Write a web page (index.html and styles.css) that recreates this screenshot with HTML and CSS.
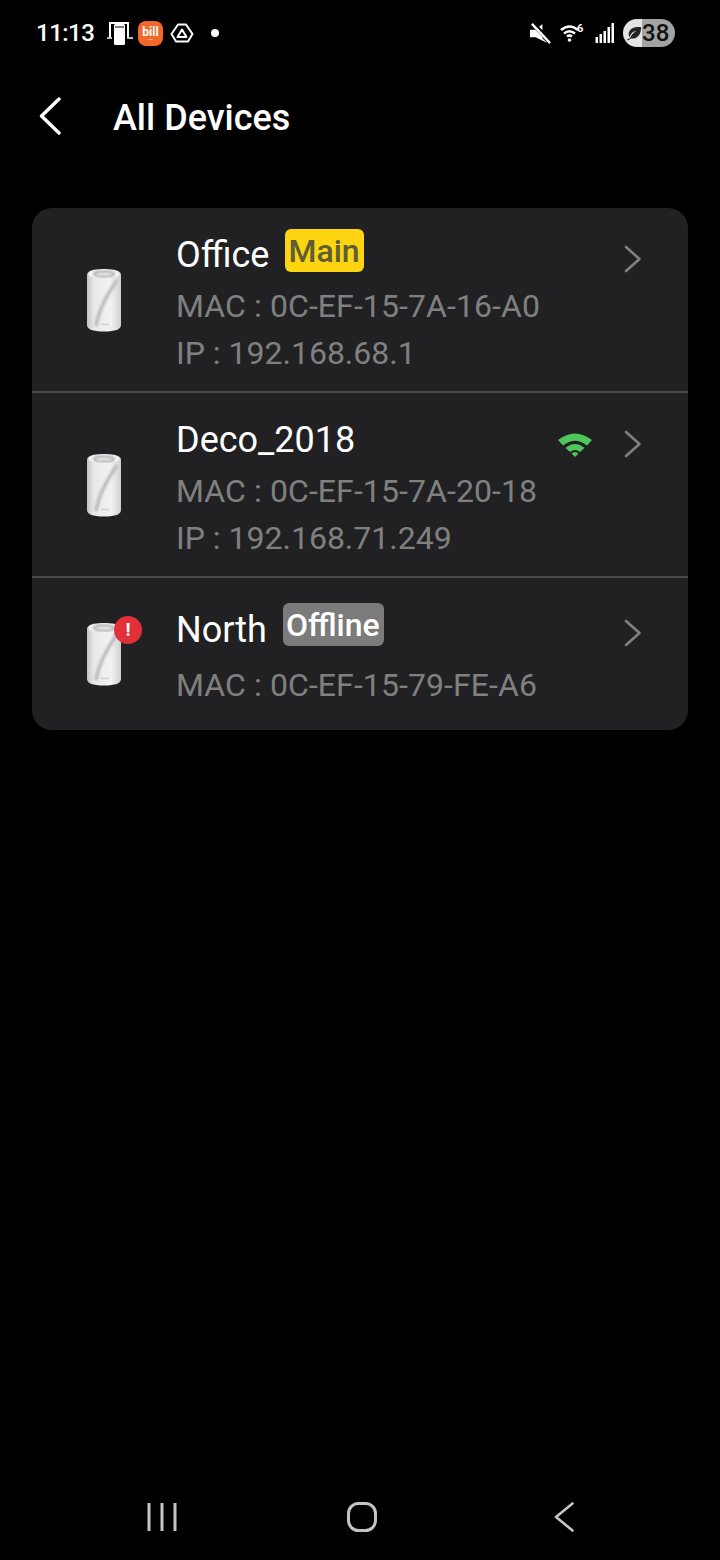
FILE: index.html
```html
<!DOCTYPE html>
<html lang="en">
<head>
    <meta charset="UTF-8">
    <meta name="viewport" content="width=device-width, initial-scale=1.0">
    <title>All Devices</title>
    <link rel="stylesheet" href="styles.css">
</head>
<body>
    <svg class="defs" width="0" height="0">
        <defs>
            <linearGradient id="deco_body" x1="0" y1="0" x2="1" y2="0">
                <stop offset="0" stop-color="#c4c4c4"/>
                <stop offset="0.2" stop-color="#e8e8e8"/>
                <stop offset="0.7" stop-color="#f2f2f2"/>
                <stop offset="1" stop-color="#d0d0d0"/>
            </linearGradient>
            <filter id="soft" x="-20%" y="-20%" width="140%" height="140%">
                <feGaussianBlur stdDeviation="0.9"/>
            </filter>
            <symbol id="deco" viewBox="0 0 36 64">
                <path d="M1 7 Q1 1 18 1 Q35 1 35 7 V57 Q35 63.500 18 63.500 Q1 63.500 1 57 Z" fill="url(#deco_body)"/>
                <ellipse cx="18" cy="6" rx="15.500" ry="4.500" fill="#f3f3f3"/>
                <ellipse cx="18" cy="6" rx="10" ry="2.500" fill="none" stroke="#a4a4a4" stroke-width="1.800" filter="url(#soft)"/>
                <path d="M31 12 C22 26 13 40 10 58" fill="none" stroke="#bcbcbc" stroke-width="3.500" filter="url(#soft)"/>
                <path d="M15 56.500 H23" stroke="#d0d0d0" stroke-width="1.500"/>
            </symbol>
            <symbol id="chevron" viewBox="0 0 18 28">
                <path d="M2 2 L15.500 14 L2 26" fill="none" stroke="#808080" stroke-width="2.600" stroke-linecap="round" stroke-linejoin="round"/>
            </symbol>
        </defs>
    </svg>

    <div class="status_bar">
        <div class="status_left">
            <span class="clock">11:13</span>
            <svg class="ic_mirror" viewBox="0 0 26 24">
                <path d="M3 16 V2 H21 V16" fill="none" stroke="#fff" stroke-width="2"/>
                <path d="M0 17 H5 M20 17 H26" stroke="#fff" stroke-width="1.600"/>
                <rect x="7" y="3" width="11" height="21" rx="1.500" fill="#fff"/>
                <path d="M8 6 H17" stroke="#000" stroke-width="1"/>
            </svg>
            <span class="ic_bill">bill<i class="bill_sub">•••</i></span>
            <svg class="ic_drive" viewBox="0 0 24 22">
                <path d="M8 2.500 H16 L22.500 12 L18 19.500 H6 L1.500 12 Z" fill="none" stroke="#fff" stroke-width="2" stroke-linejoin="round"/>
                <path d="M12 7.500 L16.500 15 H7.500 Z" fill="none" stroke="#fff" stroke-width="2" stroke-linejoin="round"/>
            </svg>
            <span class="status_dot"></span>
        </div>
        <div class="status_right">
            <svg class="ic_mute" viewBox="0 0 22 22">
                <path d="M0 7 H6 L13 1 V16 L18 21 L6 15 H0 Z" fill="#fff"/>
                <path d="M2 0 L22 20" stroke="#000" stroke-width="5"/>
                <path d="M2 1 L21 21" stroke="#fff" stroke-width="2.600"/>
            </svg>
            <svg class="ic_wifi6" viewBox="0 0 26 20">
                <path d="M1 8 Q9.500 1 18 8 M4 11.500 Q9.500 7 15 11.500 M7 14.500 Q9.500 12.500 12 14.500" fill="none" stroke="#fff" stroke-width="2.500"/>
                <circle cx="9.500" cy="18" r="1.800" fill="#fff"/>
                <text x="17" y="9.500" class="wifi_six">6</text>
            </svg>
            <svg class="ic_signal" viewBox="0 0 20 20">
                <path d="M0.500 14 H3 V20 H0.500 Z M4.500 11 H7 V20 H4.500 Z M8.500 8 H11 V20 H8.500 Z M12.500 4 H15 V20 H12.500 Z M16.500 0 H19 V20 H16.500 Z" fill="#fff"/>
            </svg>
            <div class="battery">
                <svg class="ic_leaf" viewBox="0 0 18 16">
                    <path d="M17 1 C9 0 3 3 3 9 C3 10 3.500 11 4 12 C5 8 8 6 12 5 C9 7 6 9 4.500 13 L1 15 L2 16 L5.500 13.500 C12 15 17 10 17 1 Z" fill="#222"/>
                </svg>
                <span class="battery_level">38</span>
            </div>
        </div>
    </div>

    <div class="header">
        <svg class="back" viewBox="0 0 22 38">
            <path d="M20 2 L2.500 19 L20 36" fill="none" stroke="#fff" stroke-width="3.400" stroke-linecap="round" stroke-linejoin="round"/>
        </svg>
        <h1 class="title">All Devices</h1>
    </div>

    <div class="card">
        <div class="row row_first">
            <div class="device">
                <svg class="deco"><use href="#deco"/></svg>
            </div>
            <div class="info info_low">
                <div class="name_line">
                    <span class="name">Office</span>
                    <span class="badge badge_main">Main</span>
                    <svg class="chevron"><use href="#chevron"/></svg>
                </div>
                <p class="meta meta_mac">MAC : 0C-EF-15-7A-16-A0</p>
                <p class="meta">IP : 192.168.68.1</p>
            </div>
        </div>
        <div class="row row_mid">
            <div class="device">
                <svg class="deco"><use href="#deco"/></svg>
            </div>
            <div class="info info_low">
                <div class="name_line">
                    <span class="name">Deco_2018</span>
                    <svg class="signal_good" viewBox="0 0 34 26">
                        <path d="M0 9 Q17 -4 34 9 L29 14.500 Q17 5 5 14.500 Z" fill="#4fc659"/>
                        <path d="M7.500 17 Q17 9 26.500 17 L22 21 Q17 17 12 21 Z" fill="#4fc659"/>
                        <path d="M13.500 22.500 Q17 19.500 20.500 22.500 L17 26 Z" fill="#4fc659"/>
                    </svg>
                    <svg class="chevron chevron_near"><use href="#chevron"/></svg>
                </div>
                <p class="meta meta_mac">MAC : 0C-EF-15-7A-20-18</p>
                <p class="meta">IP : 192.168.71.249</p>
            </div>
        </div>
        <div class="row row_last">
            <div class="device">
                <svg class="deco"><use href="#deco"/></svg>
                <span class="alert">!</span>
            </div>
            <div class="info info_mid">
                <div class="name_line">
                    <span class="name">North</span>
                    <span class="badge badge_offline">Offline</span>
                    <svg class="chevron"><use href="#chevron"/></svg>
                </div>
                <p class="meta meta_mac_far">MAC : 0C-EF-15-79-FE-A6</p>
            </div>
        </div>
    </div>

    <div class="nav_bar">
        <svg class="nav_recent" viewBox="0 0 30 30">
            <path d="M2 1 V29 M15 1 V29 M28 1 V29" stroke="#c4c4c4" stroke-width="3"/>
        </svg>
        <svg class="nav_home" viewBox="0 0 30 30">
            <rect x="1.500" y="1.500" width="27" height="27" rx="10" fill="none" stroke="#c4c4c4" stroke-width="3"/>
        </svg>
        <svg class="nav_back" viewBox="0 0 20 30">
            <path d="M18.500 1.500 L2 15 L18.500 28.500" fill="none" stroke="#c4c4c4" stroke-width="2.600" stroke-linecap="round" stroke-linejoin="round"/>
        </svg>
    </div>
</body>
</html>
```

FILE: styles.css
```css
* {
    margin: 0;
    padding: 0;
    box-sizing: border-box;
}

body {
    font-family: 'Roboto', sans-serif;
    background-color: #000;
    color: #fff;
    width: 720px;
    height: 1560px;
    overflow: hidden;
    display: flex;
    flex-direction: column;
}

.defs {
    position: absolute;
}

/* status bar */
.status_bar {
    height: 66px;
    display: flex;
    justify-content: space-between;
    align-items: center;
    padding: 0 45px 0 36px;
}

.status_left,
.status_right {
    display: flex;
    align-items: center;
}

.clock {
    font-size: 24px;
    font-weight: 500;
    letter-spacing: -0.5px;
    line-height: 30px;
    width: 71px;
}

.ic_mirror {
    width: 26px;
    height: 24px;
}

.ic_bill {
    width: 25px;
    height: 25px;
    margin-left: 5px;
    border-radius: 8px;
    background-color: #f2682a;
    font-size: 12px;
    font-weight: 700;
    line-height: 12px;
    text-align: center;
    padding-top: 5px;
}

.bill_sub {
    display: block;
    font-size: 4px;
    line-height: 4px;
    font-style: normal;
}

.ic_drive {
    width: 24px;
    height: 22px;
    margin-left: 7px;
}

.status_dot {
    width: 8px;
    height: 8px;
    border-radius: 50%;
    background-color: #fff;
    margin-left: 17px;
}

.ic_mute {
    width: 21px;
    height: 21px;
}

.ic_wifi6 {
    width: 26px;
    height: 20px;
    margin-left: 9px;
    margin-top: -3px;
}

.wifi_six {
    font-size: 11px;
    font-weight: 700;
    fill: #fff;
}

.ic_signal {
    width: 20px;
    height: 20px;
    margin-left: 9px;
}

.battery {
    width: 52px;
    height: 28px;
    margin-left: 8px;
    border-radius: 14px;
    background: linear-gradient(to right, #e4e4e4 0, #e4e4e4 19px, #a3a3a3 19px);
    display: flex;
    align-items: center;
    padding-left: 3px;
    color: #111;
}

.ic_leaf {
    width: 16px;
    height: 15px;
}

.battery_level {
    font-size: 24px;
    font-weight: 500;
    line-height: 28px;
}

/* header */
.header {
    height: 102px;
    display: flex;
    align-items: center;
    padding-left: 39px;
}

.back {
    width: 22px;
    height: 38px;
    margin-top: -2px;
}

.title {
    font-size: 36px;
    font-weight: 500;
    line-height: 40px;
    margin-left: 52px;
    margin-top: 2px;
}

/* device list */
.card {
    margin: 40px 32px 0;
    background-color: #212123;
    border-radius: 20px;
}

.row {
    display: flex;
    align-items: center;
}

.row_first {
    height: 185px;
    border-bottom: 2px solid #48484a;
}

.row_mid {
    height: 185px;
    border-bottom: 2px solid #48484a;
}

.row_last {
    height: 152px;
}

.device {
    position: relative;
    width: 144px;
    padding-left: 54px;
    display: flex;
}

.deco {
    width: 36px;
    height: 64px;
}

.alert {
    position: absolute;
    left: 82px;
    top: -6px;
    width: 28px;
    height: 28px;
    border-radius: 50%;
    background-color: #e2303a;
    font-size: 19px;
    font-weight: 700;
    line-height: 28px;
    text-align: center;
}

.info {
    flex: 1;
    padding-right: 46px;
}

.info_low {
    margin-top: 10px;
}

.info_mid {
    margin-top: 7px;
}

.name_line {
    display: flex;
    align-items: center;
    height: 47px;
}

.name {
    font-size: 36px;
    line-height: 47px;
}

.badge {
    border-radius: 6px;
    height: 43px;
    font-size: 32px;
    font-weight: 500;
    line-height: 44px;
    margin-top: -11px;
    padding: 0 4px 0 3px;
    margin-left: 16px;
}

.badge_main {
    background-color: #fcd40f;
    color: #5f5c38;
}

.badge_offline {
    background-color: #7b7b7b;
}

.chevron {
    width: 18px;
    height: 28px;
    margin-left: auto;
    margin-top: 6px;
}

.chevron_near {
    margin-left: 32px;
}

.signal_good {
    width: 34px;
    height: 26px;
    margin-left: auto;
    margin-top: 6px;
}

.meta {
    font-size: 32px;
    line-height: 47px;
    color: #808080;
}

.meta_mac {
    margin-top: 4px;
    letter-spacing: 0.09px;
}

.meta_mac_far {
    margin-top: 8px;
    letter-spacing: 0.09px;
}

/* nav bar */
.nav_bar {
    margin-top: auto;
    height: 58px;
    display: flex;
    align-items: flex-start;
    padding-left: 147px;
}

.nav_recent {
    width: 30px;
    height: 30px;
}

.nav_home {
    width: 30px;
    height: 30px;
    margin-left: 170px;
}

.nav_back {
    width: 20px;
    height: 30px;
    margin-left: 177px;
}
```
